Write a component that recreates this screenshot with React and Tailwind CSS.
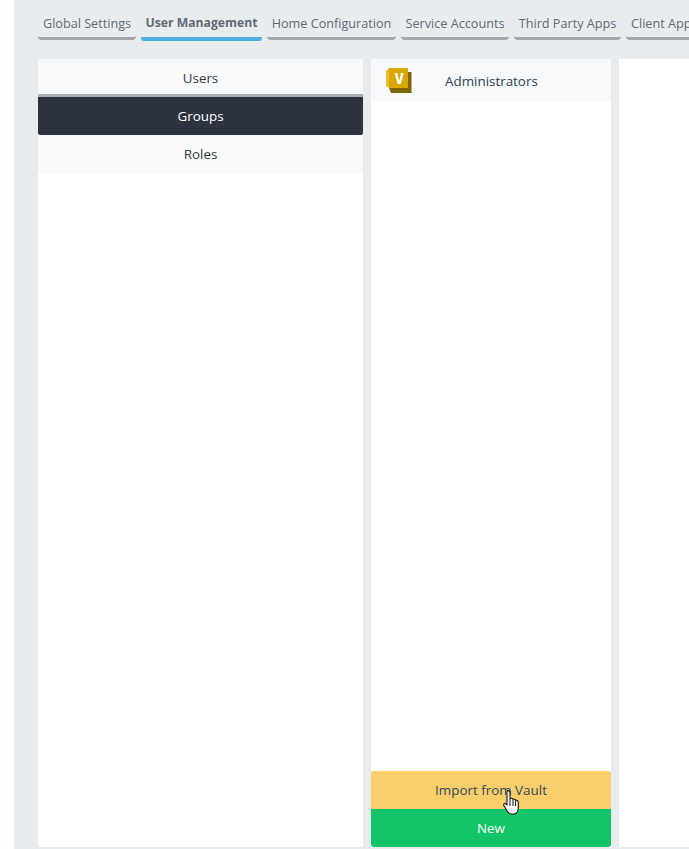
const font = { fontFamily: '"Open Sans", "Noto Sans", sans-serif' };

function Tab({ label, active, start }) {
  return (
    <div
      className={
        active
          ? "shrink-0 h-[32px] w-[121px] flex items-start justify-center pt-[5px] font-bold text-[#5f6b75] text-[12.2px] border-b-[4px] border-[#52ade3] rounded-b-[3px]"
          : start
            ? "shrink-0 h-[31px] flex items-start justify-start pl-[5px] pt-[5px] text-[#5f6a74] text-[12.65px] border-b-[3px] border-[#a0a8ae] rounded-b-[4px]"
            : "shrink-0 h-[31px] flex items-start justify-center pt-[5px] text-[#5f6a74] text-[12.65px] border-b-[3px] border-[#a0a8ae] rounded-b-[4px]"
      }
    >
      <span className="whitespace-nowrap">{label}</span>
    </div>
  );
}

function VaultIcon() {
  return (
    <svg width="26" height="27" viewBox="0 0 26 27" className="shrink-0">
      <path d="M0 4 L3 1 H22 V21 H3 L0 19 Z" fill="#e8bd2e" />
      <path d="M3 1 H22 V21 H3 Z" fill="#d6a800" />
      <path d="M3 21 H22 V5 H25.5 V26 H5 Z" fill="#7d6500" />
      <path d="M8.6 6 H11.4 L13.2 14 L15 6 H17.8 L14.7 17 H11.7 Z" fill="#ffffff" />
    </svg>
  );
}

function HandCursor() {
  return (
    <svg width="16" height="25" viewBox="0 0 16 25" className="absolute left-[132px] top-[19px] z-10">
      <path
        d="M4.8 0.7 C6 0.4 7 1.2 7 2.6 V8.6 C8 8 9.5 8 10 9.3 C11 8.8 12.2 9.1 12.6 10.3 C13.6 9.9 15.3 10.4 15.3 12.4 V17.5 C15.3 21 13.6 24 10.8 24 H8.3 C6 24 4.8 22 3.4 19.8 L0.9 15.8 C0.1 14 1.8 12.8 3.2 14 L4 14.8 V2.6 C4 1.7 4.2 1 4.8 0.7 Z"
        fill="#ffffff"
        stroke="#111111"
        strokeWidth="1.1"
        strokeLinejoin="round"
      />
      <path d="M7 9 V16 M10 9.5 V16 M12.6 10.5 V16" stroke="#111111" strokeWidth="1" fill="none" />
    </svg>
  );
}

export default function App() {
  return (
    <div className="h-[849px] w-[689px] overflow-hidden bg-[#fdfdfe] pl-[14px]" style={font}>
      <div className="h-full bg-[#e9ecef] pl-[24px] flex flex-col">
        <div className="flex gap-[5px] h-[59px] pt-[9px] items-start overflow-hidden">
          <div className="w-[98px] shrink-0 flex flex-col"><Tab label="Global Settings" /></div>
          <Tab label="User Management" active />
          <div className="w-[129px] shrink-0 flex flex-col"><Tab label="Home Configuration" /></div>
          <div className="w-[108px] shrink-0 flex flex-col"><Tab label="Service Accounts" /></div>
          <div className="w-[107px] shrink-0 flex flex-col"><Tab label="Third Party Apps" /></div>
          <div className="w-[110px] shrink-0 flex flex-col"><Tab label="Client Apps" start /></div>
        </div>
        <div className="flex gap-[8px] h-[788px] text-[13.4px] text-[#343a40]">
          <div className="w-[325px] shrink-0 bg-white flex flex-col">
            <div className="h-[38px] bg-[#f8f9fa] flex items-center justify-center pt-[3px] border-b-[3px] border-[#a9adb1] text-[#343a40]">Users</div>
            <div className="h-[38px] bg-[#2c333f] rounded-b-[2px] flex items-center justify-center text-white">Groups</div>
            <div className="h-[38px] bg-[#f8f9fa] flex items-center justify-center">Roles</div>
          </div>
          <div className="w-[240px] shrink-0 bg-white flex flex-col">
            <div className="h-[42px] bg-[#f8f9fa] flex items-start pl-[15px] pt-[8px]">
              <VaultIcon />
              <span className="ml-[33px] pt-[4px] text-[#2c3e50]">Administrators</span>
            </div>
            <div className="flex-1" />
            <div className="relative h-[38px] bg-[#f9ce6b] rounded-t-[3px] flex items-center justify-center text-[#34495e]">
              Import from Vault
              <HandCursor />
            </div>
            <div className="h-[38px] bg-[#13c468] rounded-b-[3px] flex items-center justify-center text-white font-medium">New</div>
          </div>
          <div className="flex-1 bg-white" />
        </div>
      </div>
    </div>
  );
}
